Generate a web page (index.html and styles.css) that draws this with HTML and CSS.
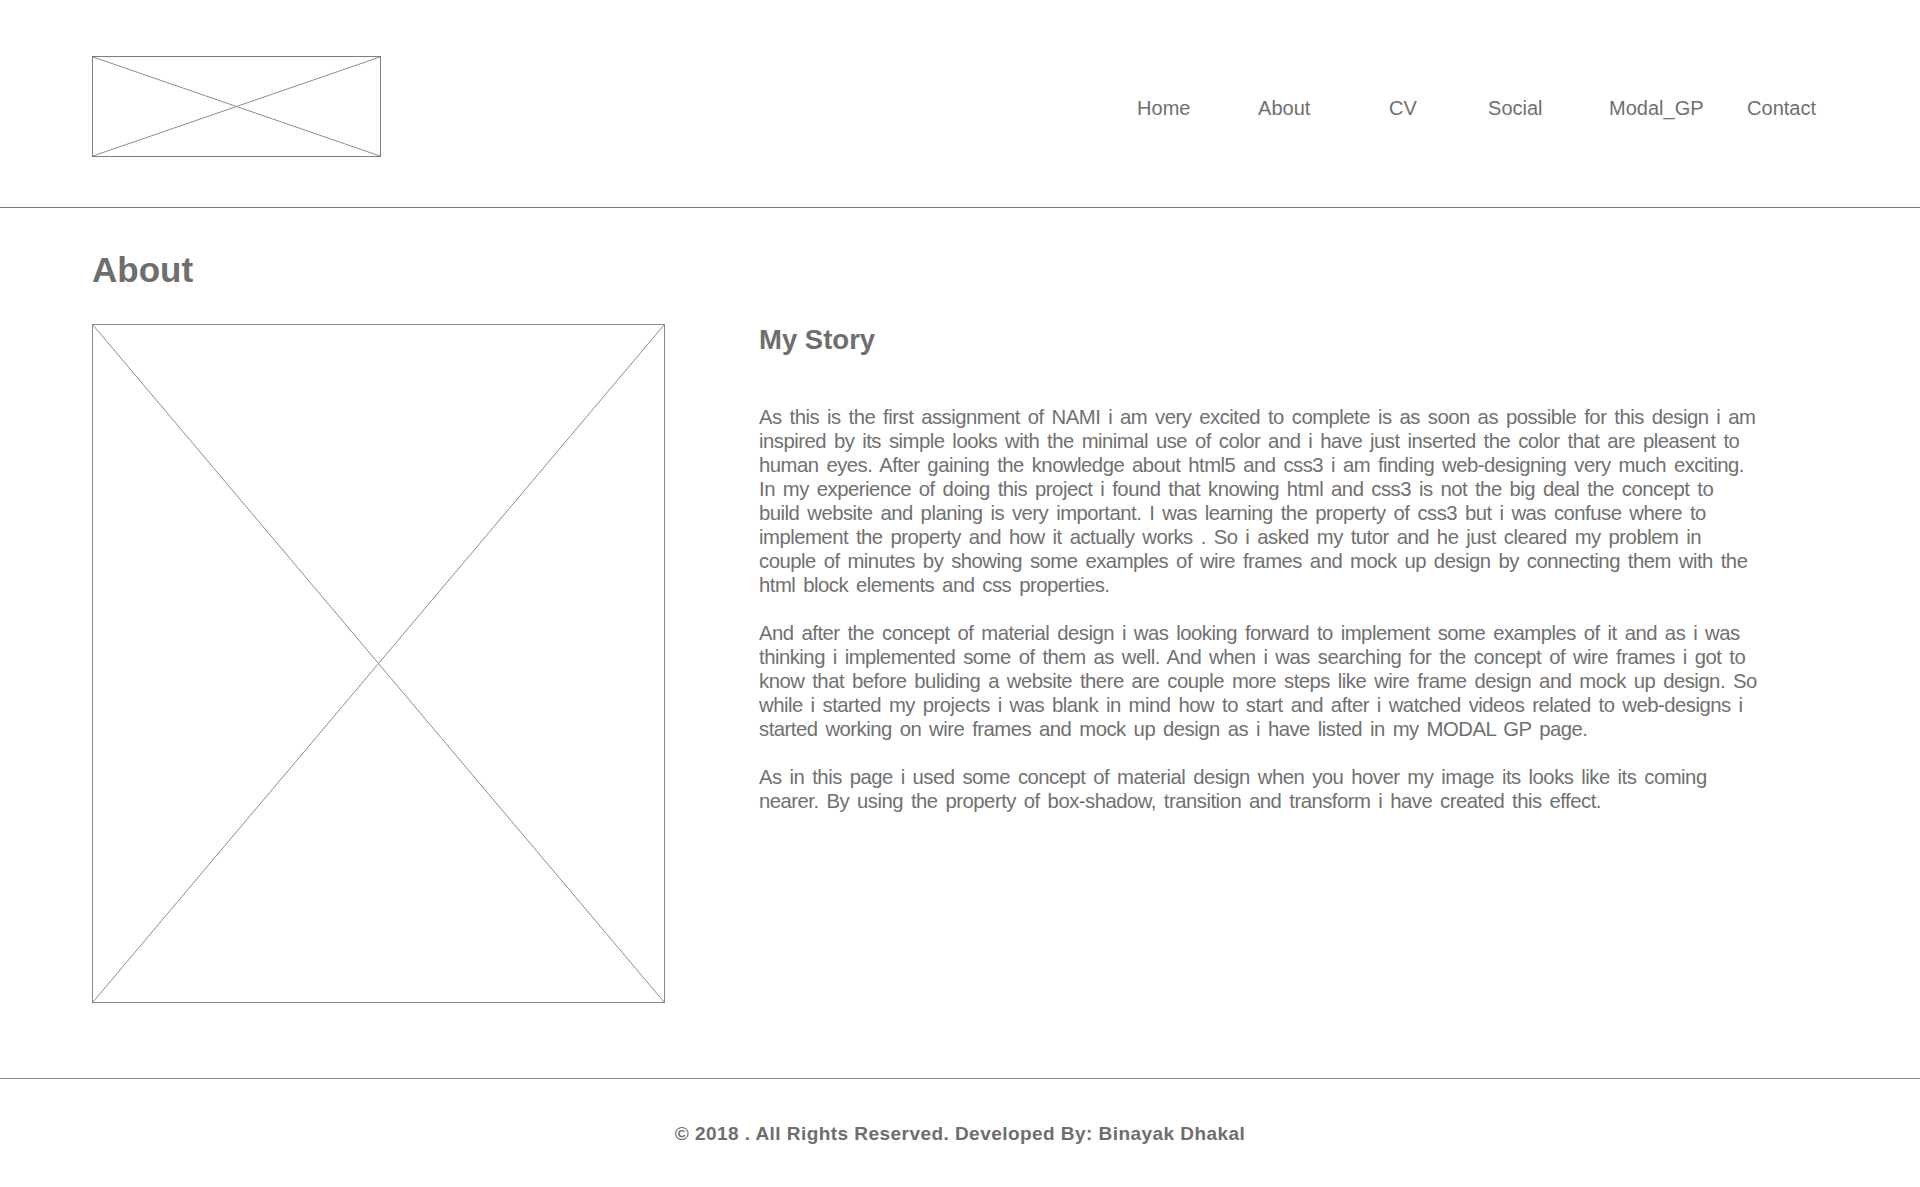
FILE: index.html
```html
<!DOCTYPE html>
<html lang="en">
<head>
<meta charset="utf-8">
<title>About</title>
<link rel="stylesheet" href="styles.css">
</head>
<body>
<header class="site-header">
  <div class="logo">
    <svg class="xbox" viewBox="0 0 100 100" preserveAspectRatio="none">
      <line x1="0" y1="0" x2="100" y2="100" vector-effect="non-scaling-stroke"/>
      <line x1="100" y1="0" x2="0" y2="100" vector-effect="non-scaling-stroke"/>
    </svg>
  </div>
  <nav class="nav">
    <a href="#">Home</a>
    <a href="#">About</a>
    <a href="#">CV</a>
    <a href="#">Social</a>
    <a href="#">Modal_GP</a>
    <a href="#">Contact</a>
  </nav>
</header>
<main class="main">
  <h1 class="page-title">About</h1>
  <div class="content">
    <div class="photo">
      <svg class="xbox" viewBox="0 0 100 100" preserveAspectRatio="none">
        <line x1="0" y1="0" x2="100" y2="100" vector-effect="non-scaling-stroke"/>
        <line x1="100" y1="0" x2="0" y2="100" vector-effect="non-scaling-stroke"/>
      </svg>
    </div>
    <section class="story">
      <h2 class="story-title">My Story</h2>
      <p>As this is the first assignment of NAMI i am very excited to complete is as soon as possible for this design i am inspired by its simple looks with the minimal use of color and i have just inserted the color that are pleasent to human eyes. After gaining the knowledge about html5 and css3 i am finding web-designing very much exciting. In my experience of doing this project i found that knowing html and css3 is not the big deal the concept to build website and planing is very important. I was learning the property of css3 but i was confuse where to implement the property and how it actually works . So i asked my tutor and he just cleared my problem in couple of minutes by showing some examples of wire frames and mock up design by connecting them with the html block elements and css properties.</p>
      <p>And after the concept of material design i was looking forward to implement some examples of it and as i was thinking i implemented some of them as well. And when i was searching for the concept of wire frames i got to know that before buliding a website there are couple more steps like wire frame design and mock up design. So while i started my projects i was blank in mind how to start and after i watched videos related to web-designs i started working on wire frames and mock up design as i have listed in my MODAL GP page.</p>
      <p>As in this page i used some concept of material design when you hover my image its looks like its coming nearer. By using the property of box-shadow, transition and transform i have created this effect.</p>
    </section>
  </div>
</main>
<footer class="site-footer">
  <p>&copy; 2018 . All Rights Reserved. Developed By: Binayak Dhakal</p>
</footer>
</body>
</html>
```

FILE: styles.css
```css
* {
  box-sizing: border-box;
}

html, body {
  margin: 0;
  padding: 0;
  background: #ffffff;
}

body {
  font-family: "Liberation Sans", Arial, Helvetica, sans-serif;
  color: #707070;
  min-height: 1187px;
}

.site-header {
  display: flex;
  align-items: center;
  justify-content: space-between;
  padding: 56px 104px 50px 92px;
  border-bottom: 1px solid #7a7a7a;
}

.logo {
  width: 289px;
  height: 101px;
  border: 1px solid #7d7d7d;
}

.xbox {
  display: block;
  width: 100%;
  height: 100%;
}

.xbox line {
  stroke: #8c8c8c;
  stroke-width: 1;
}

.nav {
  display: grid;
  grid-template-columns: 121px 131px 99px 121px 138px auto;
  font-size: 20px;
  line-height: 24px;
  padding-top: 2px;
}

.nav a {
  color: #6f6f6f;
  text-decoration: none;
}

.main {
  padding: 42px 92px 75px 92px;
}

.page-title {
  margin: 0 0 34px 0;
  font-size: 35px;
  line-height: 40px;
  font-weight: bold;
  color: #6e6e6e;
}

.content {
  display: flex;
  align-items: flex-start;
  gap: 94px;
}

.photo {
  flex: 0 0 573px;
  height: 679px;
  border: 1px solid #8a8a8a;
}

.story {
  width: 999.5px;
}

.story-title {
  margin: 0 0 49px 0;
  font-size: 27.5px;
  line-height: 32px;
  font-weight: bold;
  color: #6e6e6e;
}

.story p {
  margin: 0 0 24px 0;
  font-size: 20.3px;
  line-height: 24px;
  letter-spacing: -0.5px;
  word-spacing: 2.75px;
  color: #707070;
}

.site-footer {
  border-top: 1px solid #8a8a8a;
  padding: 43px 0 38px 0;
  text-align: center;
}

.site-footer p {
  margin: 0;
  font-size: 19px;
  line-height: 24px;
  font-weight: bold;
  letter-spacing: 0.45px;
  color: #6e6e6e;
}
```
